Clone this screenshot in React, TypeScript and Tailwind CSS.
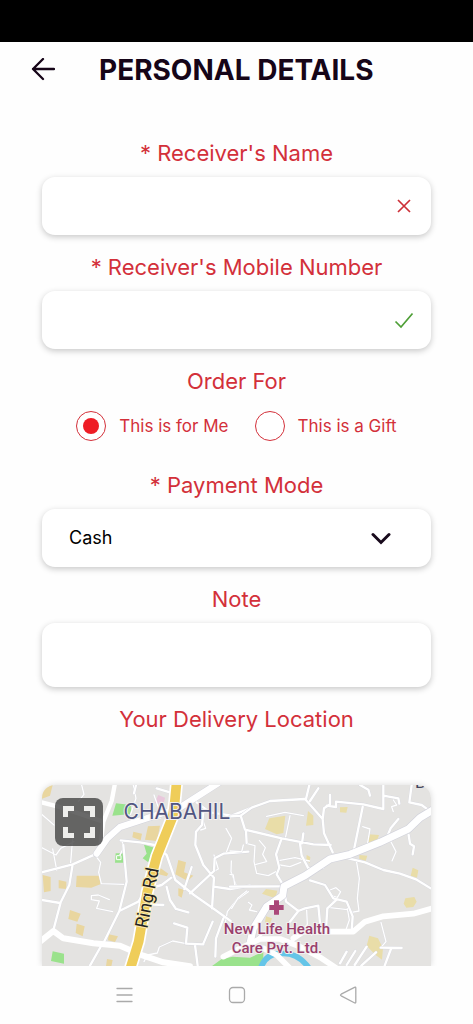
import { useState, type ReactNode } from "react";

const fieldClass =
  "block w-full rounded-[13px] border-0 bg-white text-lg text-black shadow-[0_2px_6px_rgba(0,0,0,0.22)] outline-none";

function Label({ htmlFor, children }: { htmlFor: string; children: ReactNode }) {
  return (
    <label htmlFor={htmlFor} className="mb-2.5 block text-center text-[22px] leading-7 text-[#d3303a]">
      {children}
    </label>
  );
}

function Choice({ label, checked, onSelect }: { label: string; checked: boolean; onSelect: () => void }) {
  return (
    <label className="flex items-center gap-[13px] text-[17px] leading-6 whitespace-nowrap text-[#d3303a]">
      <input
        type="radio"
        name="recipient"
        checked={checked}
        onChange={onSelect}
        className="grid size-[30px] shrink-0 appearance-none place-items-center rounded-full border-[1.5px] border-[#d3303a] bg-white before:size-4 before:rounded-full checked:before:bg-[#ee1c25]"
      />
      {label}
    </label>
  );
}

const westMinor =
  "M155 30L162 58L145 80M310 30L318 70L302 118M35 118L72 150M35 218L78 240L92 220L132 200M68 222L80 285M128 190L122 262M195 240L212 262L206 292L214 326L282 328M275 196L282 216L270 240M238 374L205 360L184 362L184 374L208 378L200 400L248 410M342 560L352 540L382 534L388 516L428 498L480 508M390 130L386 100L372 60M520 140L527 160L512 165M588 160L605 190L588 235M552 240L565 282L546 292M604 258L603 290L618 330M585 450L592 410L620 375L655 350M655 520L610 528";
const westMedium =
  "M35 292L128 268L200 236M128 268L118 330L92 382L70 466M35 375L90 384M272 196L330 202L374 210L410 240M280 210L290 320L268 408L220 505M268 408L325 380L350 342L395 330L424 308M410 240L436 315L492 360L552 402L602 438M492 360L468 340M498 170L496 210L520 270L552 308L546 400M480 355L552 288L554 250L580 236L655 230M520 110L516 150L498 170M550 335L600 342L660 332M410 336L420 375L438 402L475 412M358 388L400 390M463 342L485 276M520 506L548 440M432 445L472 458L468 506L520 508M495 510L503 572M215 510L180 572M556 545L558 490L580 430M318 30L312 55M380 40L430 55M500 82L540 112L605 122L660 100";
const eastMinor =
  "M110 124L165 112L220 122M180 122L166 190M48 205L75 212L72 260L80 295L115 302L138 290M88 196L106 218L98 238L110 260L78 268M0 228L35 230L40 210M150 256L195 248L238 258M150 270L180 275L212 262M398 155L420 162L410 220M490 110L485 95L500 90L490 75M480 195L498 230L486 258M380 262L388 310L382 370L387 408L365 412M300 345L318 338L332 350L322 368L302 360M352 400L358 435L348 464M453 442L468 500L455 515M15 335L10 300L0 298M5 400L25 368L50 348M55 382L66 390L58 405L80 410M230 405L232 448L205 480M272 455L245 480L215 468M310 378L300 398L352 404";
const eastMedium =
  "M0 124L32 122L65 98L120 78L225 72L278 132L282 175L308 232M32 122L45 164L155 190L250 208L302 210M228 72L238 30M240 78L265 40M278 132L282 100L300 88L300 60M290 92L318 96L318 80L400 88L460 102L460 30M460 62L505 70L508 86M398 96L372 224M210 205L215 242L235 280L280 278M220 175L216 205M48 168L50 204M155 190L138 238L148 278L140 298L162 334M390 30L415 44L420 62M536 180L540 206L552 214L548 238M505 132L482 160L470 188M545 30L538 82L575 90L602 110M0 335L150 334M355 250L405 262L460 285L510 296L560 314L602 340M240 316L285 330L310 370L350 380L368 424L365 468M320 374L292 400L288 462M162 338L168 380L205 408L180 440M205 408L225 400L265 392L272 465M60 510L105 470M330 565L350 530M350 570L376 528M374 570L410 515M394 572L438 532M452 518L515 519M484 519L464 572";

function CityMap() {
  return (
    <svg
      viewBox="0 0 389 181"
      preserveAspectRatio="xMidYMin slice"
      className="absolute inset-0 size-full"
      role="img"
      aria-label="Map of Chabahil"
    >
      <rect width="389" height="181" fill="#e4e3e1" />
      <g transform="translate(-12 -10) scale(.33333)" fill="none" strokeLinejoin="round" strokeLinecap="round">
        <g fill="#e9d69f">
          <path d="M35 30H68L60 62L35 72zM38 300L62 306V348L42 352zM86 315L109 320V342L86 340zM140 302H210L211 328L184 338L138 336zM120 405L152 416L142 440L115 432zM140 446L164 454L158 484L137 474zM236 478L264 484L255 501L234 496zM231 552L248 555L244 574H228zM354 154L390 152L381 198L345 194zM310 170L336 176L332 196L307 187zM445 255L468 262L462 292L490 302L473 318L436 298zM445 340L461 344L455 368L445 362zM392 280L415 296L410 304L386 298z" />
        </g>
        <path d="M385 60L405 68L400 92L374 84z" fill="#e9c8dc" />
        <g fill="#9ae28c">
          <path d="M258 85L302 90L304 117L247 122zM342 209L374 218L355 262L338 250L350 236zM68 529L102 536V566L63 558zM257 235H280V263H255z" />
          <path d="M545 574L575 552L608 545L660 548L700 530V574z" />
        </g>
        <rect x="261" y="242" width="12" height="12" stroke="#fff" strokeWidth="3" />
        <path d={westMinor} stroke="#d6d7de" strokeWidth="5" />
        <path d={westMinor} stroke="#fff" strokeWidth="4" />
        <path d={westMedium} stroke="#d6d7de" strokeWidth="9" />
        <path d={westMedium} stroke="#fff" strokeWidth="7" />
        <path d="M35 82L85 95L220 140M254 30L245 78L220 140L212 205" stroke="#fff" strokeWidth="13" />
        <path d="M200 236L232 190L270 156L392 116L440 104L490 72L565 24" stroke="#d2d3dc" strokeWidth="22" />
        <path d="M200 236L232 190L270 156L392 116L440 104L490 72L565 24" stroke="#fff" strokeWidth="19" />
        <path d="M30 500L70 468L100 490L190 505L270 512L340 542L400 562L480 574" stroke="#fff" strokeWidth="18" />
        <path d="M440 20L434 84L428 125L380 245L352 350L326 500L300 584" stroke="#fff" strokeWidth="39" />
        <path d="M440 20L434 84L428 125L380 245L352 350L326 500L300 584" stroke="#efcd59" strokeWidth="29" />
      </g>
      <g transform="translate(188 -10) scale(.33333)" fill="none" strokeLinejoin="round" strokeLinecap="round">
        <path
          fill="#e9dda8"
          d="M118 130L166 122L160 174L140 178L105 162zM234 108L250 122V150L228 152zM330 97L353 96L349 113L330 112zM415 178L447 180L442 196L420 210L412 198zM388 240L412 242L407 258L388 252zM230 240L241 246L239 264L229 256zM548 278L565 286L561 308L542 302zM526 370L553 366L560 380L550 396L529 398L521 386zM108 342L142 347L136 370L96 356zM108 424L126 430L120 448L105 442zM418 482L444 490L459 520L456 554L434 538L410 512z"
        />
        <path d={eastMinor} stroke="#d6d7de" strokeWidth="5" />
        <path d={eastMinor} stroke="#fff" strokeWidth="4" />
        <path d={eastMedium} stroke="#d6d7de" strokeWidth="9" />
        <path d={eastMedium} stroke="#fff" strokeWidth="7" />
        <path d="M90 586Q105 535 150 536Q205 530 240 584" stroke="#65c5e8" strokeWidth="17" />
        <path d="M60 505L70 460L110 395L158 362L162 334L225 302L300 252L360 238L450 202L535 162L570 128L610 104" stroke="#d2d3dc" strokeWidth="25" />
        <path d="M60 505L70 460L110 395L158 362L162 334L225 302L300 252L360 238L450 202L535 162L570 128L610 104" stroke="#fff" strokeWidth="21" />
        <path d="M-20 545L20 525L90 492L150 492L210 515L275 550L320 580M100 520L140 540L180 580M190 490L220 470L370 470L405 440L460 424L550 416L608 400" stroke="#fff" strokeWidth="17" />
        <path d="M132 376H147V390H161V405H147V419H132V405H118V390H132z" fill="#aa4779" />
      </g>
      <g fontFamily="Roboto, sans-serif" fill="#99406c" stroke="#f1eff0" strokeWidth="2" paintOrder="stroke" textAnchor="middle">
        <text x="235" y="149" fontSize="15" fontWeight="500">New Life Health</text>
        <text x="235" y="168" fontSize="15" fontWeight="500">Care Pvt. Ltd.</text>
        <text x="135" y="34" fontSize="21" fontFamily="Inter, sans-serif" fill="#515681">CHABAHIL</text>
        <text transform="translate(111 114) rotate(-79)" fontSize="18" fill="#222" stroke="#f7e8ae">Ring Rd</text>
      </g>
      <text x="373" y="3" fontFamily="Roboto, sans-serif" fontSize="17" fill="#42465f">B</text>
    </svg>
  );
}

export default function App() {
  const [recipient, setRecipient] = useState("me");
  return (
    <div className="flex min-h-screen flex-col bg-[#fefefe] font-['Inter',sans-serif]">
      <div className="h-[42px] shrink-0 bg-black" />
      <header className="flex h-14 shrink-0 items-center gap-11 pl-[31px]">
        <button type="button" aria-label="Back" className="text-[#160518]">
          <svg width="24" height="24" viewBox="0 0 24 24" fill="none" stroke="currentColor" strokeWidth="2.3" strokeLinecap="round" strokeLinejoin="round" className="block">
            <path d="M12 1L2 11L12 21M2 11H23" />
          </svg>
        </button>
        <h1 className="text-[28px] leading-8 font-bold whitespace-nowrap text-[#160518]">PERSONAL DETAILS</h1>
      </header>

      <main className="flex flex-1 flex-col px-[42px] pt-[41px]">
        <form className="flex flex-1 flex-col">
          <div className="mb-[18px]">
            <Label htmlFor="name">* Receiver's Name</Label>
            <div className="relative">
              <input id="name" type="text" className={`${fieldClass} h-[58px] pr-14 pl-7`} />
              <svg width="20" height="20" viewBox="0 0 20 20" fill="none" stroke="#cd3038" strokeWidth="1.7" className="pointer-events-none absolute top-[19px] right-[17px]">
                <path d="M4 4L16 16M16 4L4 16" />
              </svg>
            </div>
          </div>
          <div className="mb-[18px]">
            <Label htmlFor="mobile">* Receiver's Mobile Number</Label>
            <div className="relative">
              <input id="mobile" type="tel" className={`${fieldClass} h-[58px] pr-14 pl-7`} />
              <svg width="20" height="20" viewBox="0 0 20 20" fill="none" stroke="#4f9f37" strokeWidth="1.7" className="pointer-events-none absolute top-[19px] right-[17px]">
                <path d="M1.5 11.5L7 17L18.5 3.5" />
              </svg>
            </div>
          </div>
          <fieldset className="mb-[30px]">
            <legend className="mb-4 w-full text-center text-[22px] leading-7 text-[#d3303a]">Order For</legend>
            <div className="flex justify-center gap-[26px]">
              <Choice label="This is for Me" checked={recipient === "me"} onSelect={() => setRecipient("me")} />
              <Choice label="This is a Gift" checked={recipient === "gift"} onSelect={() => setRecipient("gift")} />
            </div>
          </fieldset>
          <div className="mb-[18px]">
            <Label htmlFor="payment">* Payment Mode</Label>
            <div className="relative">
              <select id="payment" className={`${fieldClass} h-[58px] appearance-none px-[27px]`}>
                <option>Cash</option>
              </select>
              <svg width="20" height="14" viewBox="0 0 20 14" fill="none" stroke="#180a1c" strokeWidth="3" strokeLinecap="round" strokeLinejoin="miter" className="pointer-events-none absolute top-[23px] right-10">
                <path d="M2 2.5L10 10.5L18 2.5" />
              </svg>
            </div>
          </div>
          <div className="mb-[18px]">
            <Label htmlFor="note">Note</Label>
            <textarea id="note" className={`${fieldClass} h-16 resize-none px-7 py-4`} />
          </div>
          <h2 className="mb-[52px] text-center text-[22px] leading-7 text-[#d3303a]">Your Delivery Location</h2>
          <section className="relative min-h-[181px] flex-1 rounded-t-[13px] shadow-[0_0_6px_rgba(0,0,0,0.15)]">
            <div className="absolute inset-0 overflow-hidden rounded-t-[13px]">
              <CityMap />
            </div>
            <button type="button" aria-label="Full screen" className="absolute top-[13px] left-[13px] grid size-12 place-items-center rounded-lg bg-[#444444]/80">
              <svg width="34" height="34" viewBox="0 0 34 34" fill="none" stroke="#eeeeec" strokeWidth="5">
                <path d="M3.5 12V3.5H12M22 3.5H30.5V12M30.5 22V30.5H22M12 30.5H3.5V22" />
              </svg>
            </button>
          </section>
        </form>
      </main>

      <nav className="relative flex h-[58px] shrink-0 items-center justify-center gap-[88px] bg-[#fefefe] text-[#aaaaaa]">
        <button type="button" aria-label="Recent apps">
          <svg width="24" height="24" viewBox="0 0 24 24" fill="none" stroke="currentColor" strokeWidth="1.3" strokeLinecap="round" className="block">
            <path d="M4 5.5H19M4 12H19M4 18.5H19" />
          </svg>
        </button>
        <button type="button" aria-label="Home">
          <svg width="24" height="24" viewBox="0 0 24 24" fill="none" stroke="currentColor" strokeWidth="1.3" className="block">
            <rect x="4.5" y="4.5" width="15" height="15" rx="3.5" />
          </svg>
        </button>
        <button type="button" aria-label="Go back">
          <svg width="24" height="24" viewBox="0 0 24 24" fill="none" stroke="currentColor" strokeWidth="1.3" strokeLinejoin="round" className="block">
            <path d="M17.5 4.3Q18.8 3.7 18.8 5V19Q18.8 20.5 17.3 19.7L4.2 12.8Q2.8 12 4.2 11.2z" />
          </svg>
        </button>
      </nav>
    </div>
  );
}
